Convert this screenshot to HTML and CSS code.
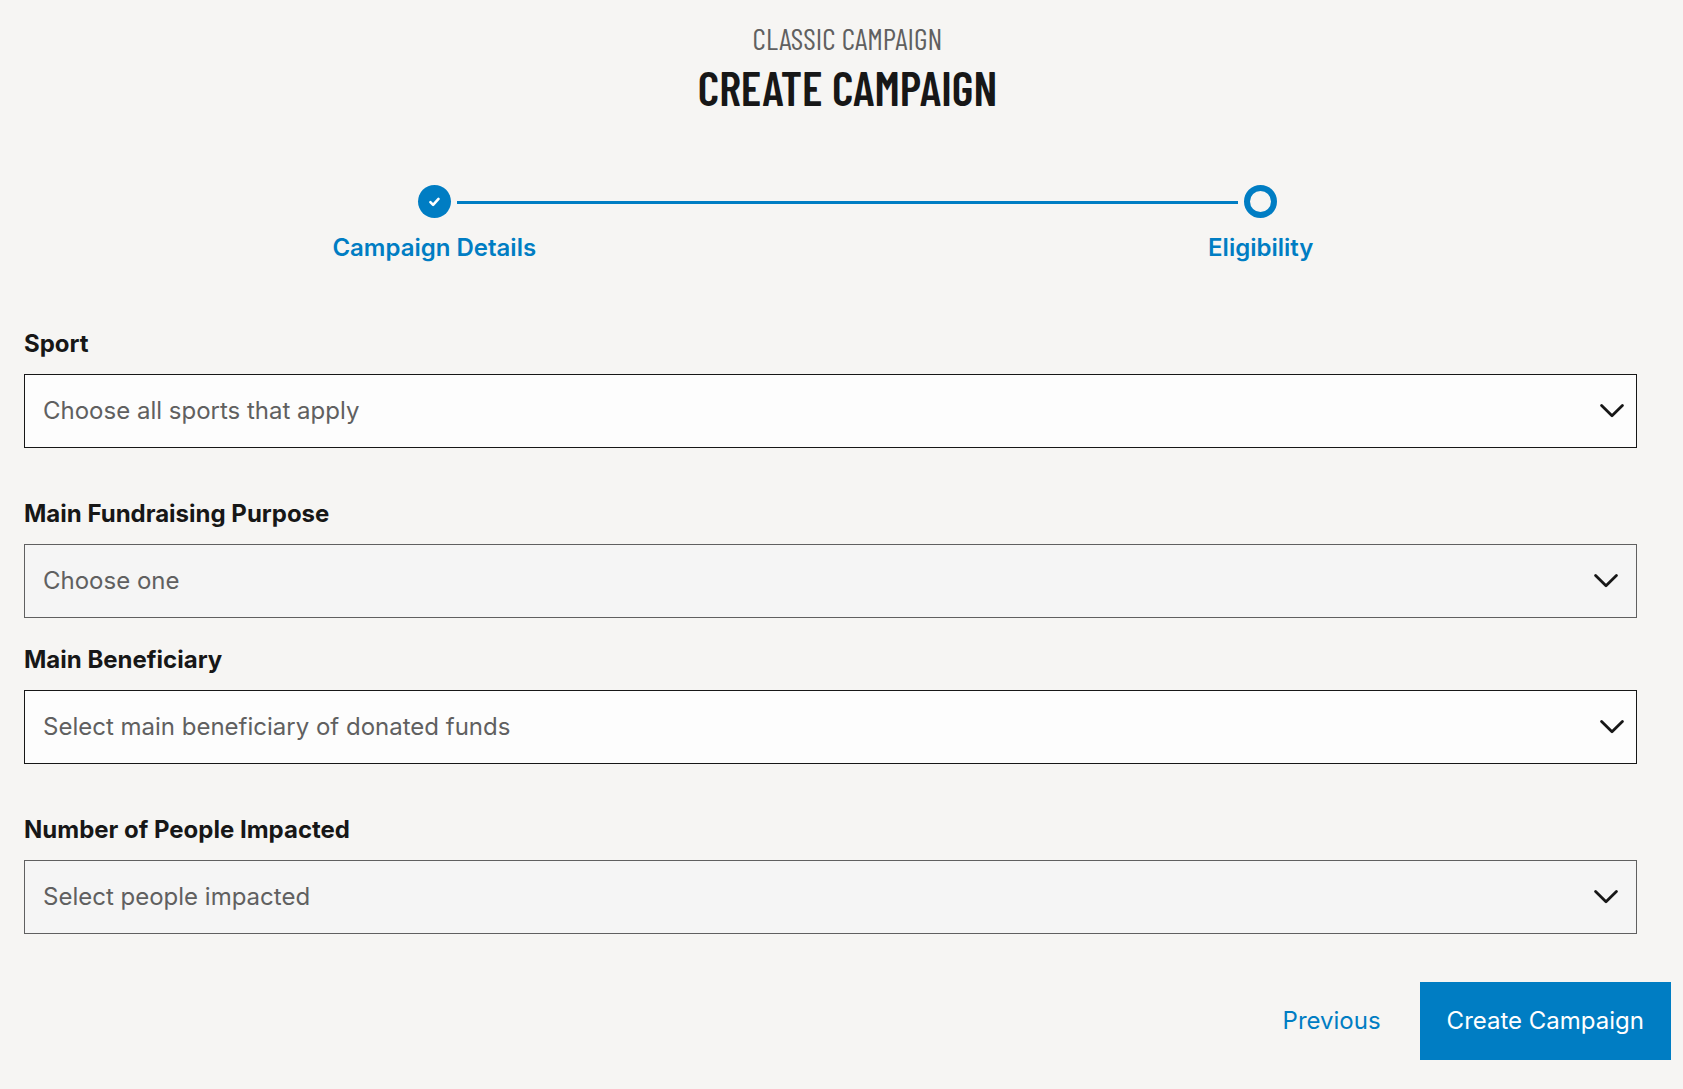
FILE: index.html
```html
<!DOCTYPE html>
<html lang="en">
<head>
<meta charset="utf-8">
<meta name="viewport" content="width=device-width, initial-scale=1">
<title>Create Campaign</title>
<link rel="stylesheet" href="styles.css">
</head>
<body>
<main class="page">
  <header class="heading">
    <p class="heading-kicker">CLASSIC CAMPAIGN</p>
    <h1 class="heading-title">CREATE CAMPAIGN</h1>
  </header>

  <ol class="stepper">
    <li class="step">
      <div class="step-track">
        <span></span>
        <span class="step-marker step-marker-done">
          <svg width="33" height="33" viewBox="0 0 33 33" fill="none" stroke="#fff" stroke-width="2.6" stroke-linecap="round" stroke-linejoin="round" aria-hidden="true"><path d="M12.4 17.1l2.7 2.7 5.4-5.9"/></svg>
        </span>
        <span class="step-line"></span>
      </div>
      <span class="step-label">Campaign Details</span>
    </li>
    <li class="step" aria-current="step">
      <div class="step-track">
        <span class="step-line"></span>
        <span class="step-marker"></span>
        <span></span>
      </div>
      <span class="step-label">Eligibility</span>
    </li>
  </ol>

  <form class="form">
    <div class="fields">
      <div class="field field-spaced">
        <label class="field-label" for="sport">Sport</label>
        <div class="picker picker-light">
          <select class="picker-select" id="sport"><option>Choose all sports that apply</option></select>
          <svg class="picker-arrow" viewBox="0 0 24 14" aria-hidden="true"><path d="M1.6 1.6L12 11.8 22.4 1.6"/></svg>
        </div>
      </div>
      <div class="field">
        <label class="field-label" for="purpose">Main Fundraising Purpose</label>
        <div class="picker">
          <select class="picker-select" id="purpose"><option>Choose one</option></select>
          <svg class="picker-arrow" viewBox="0 0 24 14" aria-hidden="true"><path d="M1.6 1.6L12 11.8 22.4 1.6"/></svg>
        </div>
      </div>
      <div class="field field-spaced">
        <label class="field-label" for="beneficiary">Main Beneficiary</label>
        <div class="picker picker-light">
          <select class="picker-select" id="beneficiary"><option>Select main beneficiary of donated funds</option></select>
          <svg class="picker-arrow" viewBox="0 0 24 14" aria-hidden="true"><path d="M1.6 1.6L12 11.8 22.4 1.6"/></svg>
        </div>
      </div>
      <div class="field">
        <label class="field-label" for="people">Number of People Impacted</label>
        <div class="picker">
          <select class="picker-select" id="people"><option>Select people impacted</option></select>
          <svg class="picker-arrow" viewBox="0 0 24 14" aria-hidden="true"><path d="M1.6 1.6L12 11.8 22.4 1.6"/></svg>
        </div>
      </div>
    </div>
    <div class="actions">
      <button class="button button-text" type="button">Previous</button>
      <button class="button button-primary" type="submit">Create Campaign</button>
    </div>
  </form>
</main>
</body>
</html>
```

FILE: styles.css
```css
*,
*::before,
*::after {
  box-sizing: border-box;
}

body {
  margin: 0;
  background: #f6f5f3;
  color: #171717;
  font-family: Inter, "Liberation Sans", sans-serif;
  font-size: 24px;
  line-height: 32px;
}

.page {
  padding: 18px 12px 28px 24px;
}

.heading {
  text-align: center;
  font-family: "Barlow Condensed", "Roboto Condensed", "Liberation Sans Narrow", "Liberation Sans", sans-serif;
}

.heading-kicker {
  margin: 0;
  color: #606060;
  font-size: 30px;
  font-weight: 400;
  line-height: 40px;
}

.heading-title {
  margin: 0;
  font-size: 47px;
  font-weight: 600;
  line-height: 58px;
}

.stepper {
  display: grid;
  grid-template-columns: 1fr 1fr;
  margin: 69px -3px 64px;
  padding: 0;
  list-style: none;
  color: #007dc3;
}

.step {
  display: flex;
  flex-direction: column;
  gap: 14px;
}

.step-track {
  display: grid;
  grid-template-columns: 1fr auto 1fr;
  align-items: center;
  column-gap: 6px;
}

.step-line {
  height: 3px;
  margin-top: 2px;
  background: #007dc3;
}

.step-marker {
  display: block;
  width: 33px;
  height: 33px;
  border: 6px solid #007dc3;
  border-radius: 50%;
}

.step-marker-done {
  border: 0;
  background: #007dc3;
}

.step-marker svg {
  display: block;
}

.step-label {
  text-align: center;
  font-weight: 600;
}

.fields {
  padding-right: 34px;
}

.field {
  display: flex;
  flex-direction: column;
  gap: 14px;
  margin-bottom: 26px;
}

.field-spaced {
  margin-bottom: 50px;
}

.field:last-child {
  margin-bottom: 48px;
}

.field-label {
  font-weight: 700;
}

.picker {
  display: grid;
  align-items: center;
}

.picker-select {
  grid-area: 1 / 1;
  width: 100%;
  height: 74px;
  margin: 0;
  padding: 0 56px 0 18px;
  appearance: none;
  border: 1px solid #606060;
  border-radius: 0;
  background: #f5f5f5;
  color: #606060;
  font: inherit;
}

.picker-light .picker-select {
  border-color: #171717;
  background: #fdfdfd;
}

.picker-arrow {
  grid-area: 1 / 1;
  justify-self: end;
  width: 24px;
  height: 14px;
  margin-right: 19px;
  fill: none;
  stroke: #171717;
  stroke-width: 2.8;
  stroke-linecap: round;
  stroke-linejoin: round;
  pointer-events: none;
}

.picker-light .picker-arrow {
  margin-right: 13px;
}

.actions {
  display: flex;
  justify-content: flex-end;
  gap: 12px;
}

.button {
  height: 78px;
  padding: 0 27px;
  border: 0;
  background: transparent;
  font: inherit;
  cursor: pointer;
}

.button-text {
  color: #007dc3;
}

.button-primary {
  background: #007dc3;
  color: #fff;
}
```
